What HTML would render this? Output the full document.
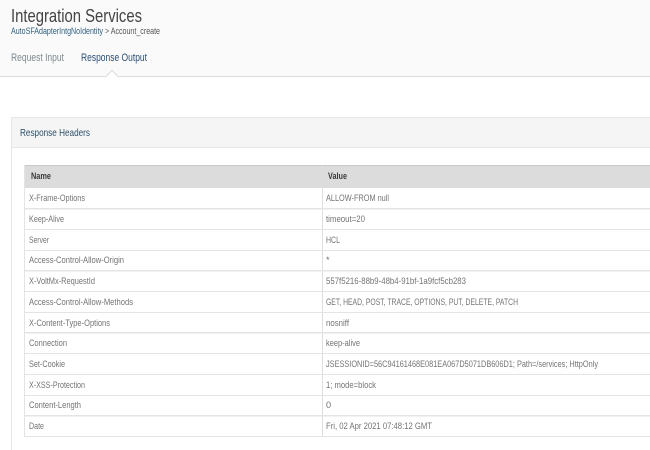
<!DOCTYPE html>
<html><head><meta charset="utf-8"><style>
html,body{margin:0;padding:0;background:#fff;width:650px;height:450px;overflow:hidden}
svg{display:block}
text{font-family:"Liberation Sans",sans-serif}
.k{font-size:9.2px;fill:#747474}
</style></head><body>
<svg width="650" height="450" viewBox="0 0 650 450" xmlns="http://www.w3.org/2000/svg">
<rect x="0" y="0" width="650" height="76" fill="#fafafa"/>
<path d="M0 76.5H106L112 70.5L118 76.5H650" fill="#fff" stroke="#dcdcdc" stroke-width="1"/>
<text x="11" y="22" font-size="18.5" fill="#444" textLength="131" lengthAdjust="spacingAndGlyphs">Integration Services</text>
<text x="11" y="34" font-size="9" fill="#2f5f7f" textLength="92" lengthAdjust="spacingAndGlyphs">AutoSFAdapterIntgNoIdentity</text>
<text x="105" y="34" font-size="9" fill="#555" textLength="55" lengthAdjust="spacingAndGlyphs">&gt; Account_create</text>
<text x="11" y="61" font-size="11" fill="#7d8a90" textLength="53" lengthAdjust="spacingAndGlyphs">Request Input</text>
<text x="81" y="61" font-size="11" fill="#2b4f73" textLength="66" lengthAdjust="spacingAndGlyphs">Response Output</text>

<rect x="11.5" y="117.5" width="650" height="340" fill="#fff" stroke="#e6e6e6"/>
<rect x="12" y="118" width="638" height="29" fill="#f5f5f5"/>
<rect x="12" y="147" width="638" height="1" fill="#e6e6e6"/>
<text x="20" y="136" font-size="10.5" fill="#2b4f6b" textLength="70" lengthAdjust="spacingAndGlyphs">Response Headers</text>

<rect x="25" y="165" width="625" height="23" fill="#dcdcdc"/>
<rect x="25" y="165" width="625" height="1" fill="#c8c8c8"/>
<rect x="24" y="165" width="1" height="272" fill="#e4e4e4"/>
<rect x="322" y="165" width="1" height="272" fill="#dedede"/>
<text x="31" y="179" font-size="9.2" font-weight="bold" fill="#3a3a3a" textLength="20" lengthAdjust="spacingAndGlyphs">Name</text>
<text x="328" y="179" font-size="9.2" font-weight="bold" fill="#3a3a3a" textLength="19" lengthAdjust="spacingAndGlyphs">Value</text>

<g fill="#e4e4e4">
<rect x="25" y="208" width="625" height="1.5"/>
<rect x="25" y="229" width="625" height="1"/>
<rect x="25" y="250" width="625" height="1"/>
<rect x="25" y="270" width="625" height="1.5"/>
<rect x="25" y="291" width="625" height="1"/>
<rect x="25" y="312" width="625" height="1"/>
<rect x="25" y="332" width="625" height="1.5"/>
<rect x="25" y="353" width="625" height="1"/>
<rect x="25" y="374" width="625" height="1"/>
<rect x="25" y="395" width="625" height="1"/>
<rect x="25" y="415" width="625" height="1.5"/>
<rect x="25" y="436" width="625" height="1"/>
</g>

<text class="k" x="29" y="201" textLength="56" lengthAdjust="spacingAndGlyphs">X-Frame-Options</text>
<text class="k" x="29" y="222" textLength="35" lengthAdjust="spacingAndGlyphs">Keep-Alive</text>
<text class="k" x="29" y="243" textLength="20" lengthAdjust="spacingAndGlyphs">Server</text>
<text class="k" x="29" y="263" textLength="95" lengthAdjust="spacingAndGlyphs">Access-Control-Allow-Origin</text>
<text class="k" x="29" y="284" textLength="66" lengthAdjust="spacingAndGlyphs">X-VoltMx-RequestId</text>
<text class="k" x="29" y="305" textLength="104" lengthAdjust="spacingAndGlyphs">Access-Control-Allow-Methods</text>
<text class="k" x="29" y="326" textLength="81" lengthAdjust="spacingAndGlyphs">X-Content-Type-Options</text>
<text class="k" x="29" y="346" textLength="38" lengthAdjust="spacingAndGlyphs">Connection</text>
<text class="k" x="29" y="367" textLength="36" lengthAdjust="spacingAndGlyphs">Set-Cookie</text>
<text class="k" x="29" y="388" textLength="56" lengthAdjust="spacingAndGlyphs">X-XSS-Protection</text>
<text class="k" x="29" y="408" textLength="52" lengthAdjust="spacingAndGlyphs">Content-Length</text>
<text class="k" x="29" y="429" textLength="15" lengthAdjust="spacingAndGlyphs">Date</text>

<text class="k" x="326" y="201" textLength="63" lengthAdjust="spacingAndGlyphs">ALLOW-FROM null</text>
<text class="k" x="326" y="222" textLength="39" lengthAdjust="spacingAndGlyphs">timeout=20</text>
<text class="k" x="326" y="243" textLength="14" lengthAdjust="spacingAndGlyphs">HCL</text>
<text class="k" x="326" y="263">*</text>
<text class="k" x="326" y="284" textLength="140" lengthAdjust="spacingAndGlyphs">557f5216-88b9-48b4-91bf-1a9fcf5cb283</text>
<text class="k" x="326" y="305" textLength="192" lengthAdjust="spacingAndGlyphs">GET, HEAD, POST, TRACE, OPTIONS, PUT, DELETE, PATCH</text>
<text class="k" x="326" y="326" textLength="23" lengthAdjust="spacingAndGlyphs">nosniff</text>
<text class="k" x="326" y="346" textLength="34" lengthAdjust="spacingAndGlyphs">keep-alive</text>
<text class="k" x="326" y="367" textLength="272" lengthAdjust="spacingAndGlyphs">JSESSIONID=56C94161468E081EA067D5071DB606D1; Path=/services; HttpOnly</text>
<text class="k" x="326" y="388" textLength="50" lengthAdjust="spacingAndGlyphs">1; mode=block</text>
<text class="k" x="326" y="408">0</text>
<text class="k" x="326" y="429" textLength="106" lengthAdjust="spacingAndGlyphs">Fri, 02 Apr 2021 07:48:12 GMT</text>
</svg>
</body></html>
